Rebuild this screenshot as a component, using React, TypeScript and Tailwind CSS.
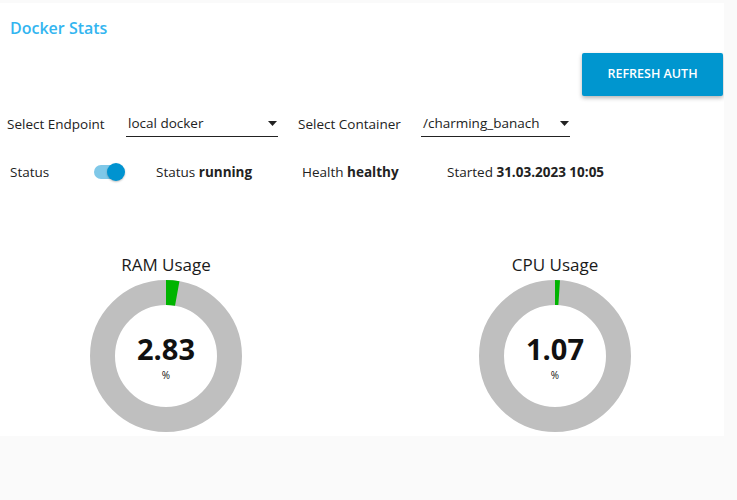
import React from 'react';

const font = { fontFamily: '"Open Sans", "Noto Sans", sans-serif' };

const Gauge = ({ title, value }: { title: string; value: number }) => {
  const r = 63.5;
  const c = 2 * Math.PI * r;
  const seg = (value / 100) * c;
  return (
    <div className="flex flex-col items-center w-[152px]">
      <div className="text-[17px] text-[#1a1a1a] leading-[22px] mb-[4px]">{title}</div>
      <div className="relative w-[152px] h-[152px]">
        <svg width="152" height="152" viewBox="0 0 152 152">
          <circle cx="76" cy="76" r={r} fill="none" stroke="#bfbfbf" strokeWidth="25" />
          <circle
            cx="76"
            cy="76"
            r={r}
            fill="none"
            stroke="#00b400"
            strokeWidth="25"
            strokeDasharray={`${seg} ${c}`}
            transform="rotate(-90 76 76)"
          />
        </svg>
        <div className="absolute inset-0 flex flex-col items-center justify-center pt-[5px]">
          <div className="text-[29px] font-bold text-[#111] leading-[26px]">{value.toFixed(2)}</div>
          <div className="text-[10px] text-[#111] leading-[12px] mt-[7px]">%</div>
        </div>
      </div>
    </div>
  );
};

const Select = ({ value, width }: { value: string; width: string }) => (
  <div className={`${width} h-[26px] border-b border-[#222] flex items-center justify-between pl-[2px] pr-[1px]`}>
    <span className="text-[13.5px] text-[#222]">{value}</span>
    <svg width="9" height="5" viewBox="0 0 9 5">
      <path d="M0 0 L9 0 L4.5 5 Z" fill="#222" />
    </svg>
  </div>
);

export default function App() {
  return (
    <div className="min-h-[500px] w-[737px] bg-[#fafafa] pt-[3px]" style={font}>
      <div className="w-[724px] h-[433px] bg-white overflow-hidden">
        <div className="px-[10px] pt-[14px] text-[16px] font-semibold text-[#33b5f0] leading-[22px]">Docker Stats</div>

        <div className="flex justify-end pr-[1px] mt-[14px]">
          <button className="w-[141px] h-[43px] bg-[#0096cf] text-white text-[12.5px] font-semibold rounded-[2px] shadow-[0_2px_4px_rgba(0,0,0,0.3)]">
            REFRESH AUTH
          </button>
        </div>

        <div className="flex items-center mt-[15px] pl-[7px] text-[13.5px] text-[#222]">
          <span className="w-[119px]">Select Endpoint</span>
          <Select value="local docker" width="w-[152px]" />
          <span className="ml-[20px] w-[123px]">Select Container</span>
          <Select value="/charming_banach" width="w-[149px]" />
        </div>

        <div className="flex items-center mt-[23px] pl-[10px] text-[13.5px] text-[#222] h-[24px]">
          <span className="w-[84px]">Status</span>
          <div className="relative w-[32px] h-[20px] flex items-center">
            <div className="w-[26px] h-[14px] rounded-full bg-[#7fc8e8]" />
            <div className="absolute left-[13px] top-[1px] w-[18px] h-[18px] rounded-full bg-[#0093d0] shadow-[0_1px_2px_rgba(0,0,0,0.25)]" />
          </div>
          <span className="ml-[30px] w-[146px]">Status <b>running</b></span>
          <span className="w-[145px]">Health <b>healthy</b></span>
          <span>Started <b>31.03.2023 10:05</b></span>
        </div>

        <div className="flex pl-[90px] gap-[237px] mt-[70px]">
          <Gauge title="RAM Usage" value={2.83} />
          <Gauge title="CPU Usage" value={1.07} />
        </div>
      </div>
    </div>
  );
}
